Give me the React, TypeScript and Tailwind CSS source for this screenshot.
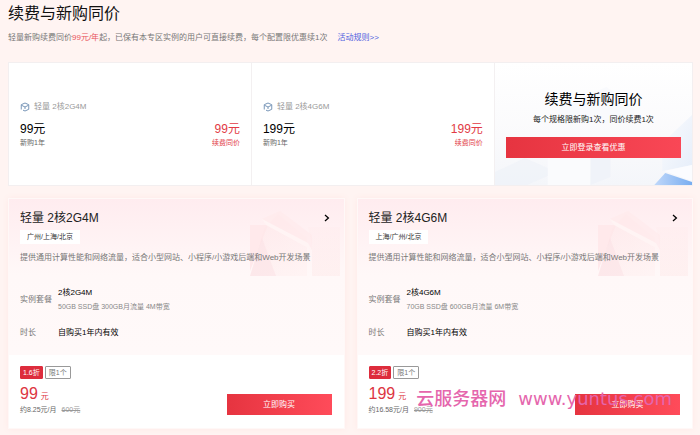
import React from 'react';

interface Plan {
  name: string;
  regions: string;
  spec: string;
  detail: string;
  discount: string;
  price: string;
  monthly: string;
  original: string;
}

const plans: Plan[] = [
  {
    name: '2核2G4M',
    regions: '广州/上海/北京',
    spec: '2核2G4M',
    detail: '50GB SSD盘 300GB月流量 4M带宽',
    discount: '1.6折',
    price: '99',
    monthly: '约8.25元/月',
    original: '600元',
  },
  {
    name: '2核4G6M',
    regions: '上海/广州/北京',
    spec: '2核4G6M',
    detail: '70GB SSD盘 600GB月流量 6M带宽',
    discount: '2.2折',
    price: '199',
    monthly: '约16.58元/月',
    original: '900元',
  },
];

const CubeIcon: React.FC = () => (
  <svg className="size-[10px] shrink-0" viewBox="0 0 20 20" fill="none" stroke="#7896b8" strokeWidth="2" aria-hidden="true">
    <path d="M2.5 15V5.4L10 2l7.5 3.4v9.2L10 18l-4-1.8" />
    <path d="M3 6.500 10 10l7-3.500M10 10v4" />
  </svg>
);

const CardArt: React.FC = () => (
  <svg className="absolute top-[12px] right-[2px] h-[65px] w-[92px]" viewBox="0 0 92 65" aria-hidden="true">
    <defs>
      <linearGradient id="art-face" x1="0" y1="0" x2="1" y2="1">
        <stop offset="0" stopColor="#fde3e5" />
        <stop offset="1" stopColor="#fff0f0" />
      </linearGradient>
      <linearGradient id="art-side" x1="0" y1="0" x2="0" y2="1">
        <stop offset="0" stopColor="#ffebec" />
        <stop offset="1" stopColor="#fde2e2" />
      </linearGradient>
    </defs>
    <path d="M0 14h18L0 60z" fill="#ffe9eb" />
    <path d="M14 18 28 3l29 24v38H0z" fill="url(#art-face)" opacity="0.5" />
    <path d="M12 8 30 0l32 24v15z" fill="#ffe9eb" opacity="0.6" />
    <path d="m12 8 46 24 4 7-46-25z" fill="#fff4f4" />
    <path d="M58 16h32v49H62V34z" fill="url(#art-side)" opacity="0.35" />
    <path d="M0 65 12 27l14 38z" fill="#fbdde0" opacity="0.4" />
  </svg>
);

const BannerArt: React.FC = () => (
  <svg className="absolute inset-0 h-full w-full" viewBox="0 0 198 122" preserveAspectRatio="none" aria-hidden="true">
    <defs>
      <linearGradient id="floor" x1="0" y1="0" x2="0" y2="1">
        <stop offset="0" stopColor="#ffffff" />
        <stop offset="0.6" stopColor="#fafafc" />
        <stop offset="1" stopColor="#f4f6fa" />
      </linearGradient>
      <linearGradient id="wedge" x1="0" y1="0" x2="1" y2="0">
        <stop offset="0" stopColor="#c0d8fa" />
        <stop offset="1" stopColor="#78adf0" />
      </linearGradient>
      <linearGradient id="slab" x1="0" y1="0" x2="1" y2="1">
        <stop offset="0" stopColor="#fafbfd" />
        <stop offset="1" stopColor="#e6eefa" />
      </linearGradient>
    </defs>
    <path d="M0 0h198v122H0z" fill="url(#floor)" />
    <path d="m64 44 48-20 28 22v14H64z" fill="#f9fafd" />
    <path d="m0 109 30-14 32 14-30 13H0z" fill="#e9edf5" opacity="0.35" />
    <path d="M53 92h43v30H53z" fill="#fafbfd" />
    <path d="M96 92h20v22l-20 8z" fill="#f0f3f9" />
    <path d="m168 80 30-28v50l-30 6z" fill="url(#slab)" />
    <path d="m170 108 28-6v16z" fill="#fbfcff" />
    <path d="m160 122 11-12 27 9v3z" fill="url(#wedge)" />
  </svg>
);

const OfferCell: React.FC<{ name: string; price: string }> = ({ name, price }) => (
  <div className="border-r border-[#f3f0f1] px-[11px] pt-[38px] pb-[36px]">
    <div className="flex items-center gap-1 text-[8px] leading-[12px] text-[#999]">
      <CubeIcon />
      <span>轻量 {name}</span>
    </div>
    <div className="mt-2 flex justify-between">
      <div>
        <p className="text-[12px] leading-[16px] text-black">{price}元</p>
        <p className="text-[7px] leading-[12px] text-[#666]">新购1年</p>
      </div>
      <div className="text-right text-[#e23a45]">
        <p className="text-[12px] leading-[16px]">{price}元</p>
        <p className="text-[7px] leading-[12px]">续费同价</p>
      </div>
    </div>
  </div>
);

const PlanCard: React.FC<{ plan: Plan }> = ({ plan }) => (
  <article className="flex-1 border border-[#fff8f7] bg-white shadow-[0_0_6px_#ffe9e7]">
    <div className="relative bg-[linear-gradient(#ffecef,#fff8f8_76px,#fff9f9)] px-[11px] pt-[11px] pb-4">
      <CardArt />
      <div className="relative">
        <div className="flex items-center justify-between">
          <h2 className="text-[12px] leading-[16px] text-[#222]">轻量 {plan.name}</h2>
          <a href="#detail" aria-label={plan.name} className="mr-[3px] text-black">
            <svg className="h-[8px] w-[6px]" viewBox="0 0 6 8" fill="none" stroke="currentColor" strokeWidth="1.3" aria-hidden="true">
              <path d="m1 1 3.4 3L1 7" />
            </svg>
          </a>
        </div>
        <span className="mt-1 block w-fit bg-white px-[7px] text-[7px] leading-[14px] text-[#333]">{plan.regions}</span>
        <p className="mt-2 text-[8px] leading-[12px] whitespace-nowrap text-[#777]">
          提供通用计算性能和网络流量，适合小型网站、小程序/小游戏后端和Web开发场景
        </p>
        <dl className="mt-[22px] grid grid-cols-[38px_1fr] items-center gap-y-[13px] text-[8px] leading-[12px]">
          <dt className="text-[#777]">实例套餐</dt>
          <dd>
            <p className="leading-[14px] text-black">{plan.spec}</p>
            <p className="text-[7px] leading-[14px] text-[#888]">{plan.detail}</p>
          </dd>
          <dt className="text-[#777]">时长</dt>
          <dd className="text-black">自购买1年内有效</dd>
        </dl>
      </div>
    </div>
    <div className="px-[11px] pt-[11px] pb-3">
      <div className="flex gap-[2px] text-[7px] leading-[11px]">
        <span className="rounded-[1px] border border-[#dd2c3c] bg-[#dd2c3c] px-[2px] text-white">{plan.discount}</span>
        <span className="rounded-[1px] border border-[#999] px-[3px] text-[#777]">限1个</span>
      </div>
      <div className="mt-[5px] flex items-end justify-between">
        <div>
          <p className="flex h-[20px] items-baseline gap-[3px] text-[#dd3542]">
            <span className="text-[16px] leading-[20px]">{plan.price}</span>
            <span className="text-[8px] leading-[12px]">元</span>
          </p>
          <p className="flex gap-[5px] text-[7px] leading-[12px] text-[#666]">
            <span>{plan.monthly}</span>
            <del className="text-[#999]">{plan.original}</del>
          </p>
        </div>
        <button type="button" className="mr-[1px] mb-[1px] w-[105px] bg-linear-to-r from-[#e63440] to-[#ff4b5a] text-[8px] leading-[21px] text-white">
          立即购买
        </button>
      </div>
    </div>
  </article>
);

export default function App() {
  return (
    <main className="relative min-h-screen bg-[#fff4f2] pt-[3px] pr-[7px] pb-[7px] pl-2 font-['Liberation_Sans','Noto_Sans_CJK_SC',sans-serif]">
      <h1 className="text-[16px] leading-[22px] text-[#111]">续费与新购同价</h1>
      <p className="mt-[6px] text-[8px] leading-[14px] text-[#777]">
        轻量新购续费同价<span className="text-[#e8515a]">99元/年</span>起，已保有本专区实例的用户可直接续费，每个配置限优惠续1次
        <a href="#rules" className="ml-[10px] text-[#4d5ee0]">活动规则&gt;&gt;</a>
      </p>

      <section className="mt-[17px] grid grid-cols-[244fr_244fr_198fr] border border-[#f3eff0] bg-white">
        <OfferCell name="2核2G4M" price="99" />
        <OfferCell name="2核4G6M" price="199" />
        <div className="relative">
          <BannerArt />
          <div className="relative px-[11px] pt-[26px] text-center">
            <h2 className="text-[14px] leading-[20px] text-black">续费与新购同价</h2>
            <p className="mt-[5px] text-[8px] leading-[12px] text-[#222]">每个规格限新购1次，同价续费1次</p>
            <button type="button" className="mt-[11px] block w-full bg-linear-to-r from-[#e63440] to-[#f94756] text-[8px] leading-[21px] text-white">
              立即登录查看优惠
            </button>
          </div>
        </div>
      </section>

      <section className="mt-3 flex gap-3">
        {plans.map((plan) => (
          <PlanCard key={plan.name} plan={plan} />
        ))}
      </section>

      <p className="pointer-events-none absolute right-7 bottom-[27px] flex gap-3 font-['DejaVu_Sans','Noto_Sans_CJK_SC',sans-serif] text-[18px] leading-[20px] font-medium whitespace-nowrap text-[#e566ad]">
        <span>云服务器网</span>
        <span>www.yuntus.com</span>
      </p>
    </main>
  );
}
